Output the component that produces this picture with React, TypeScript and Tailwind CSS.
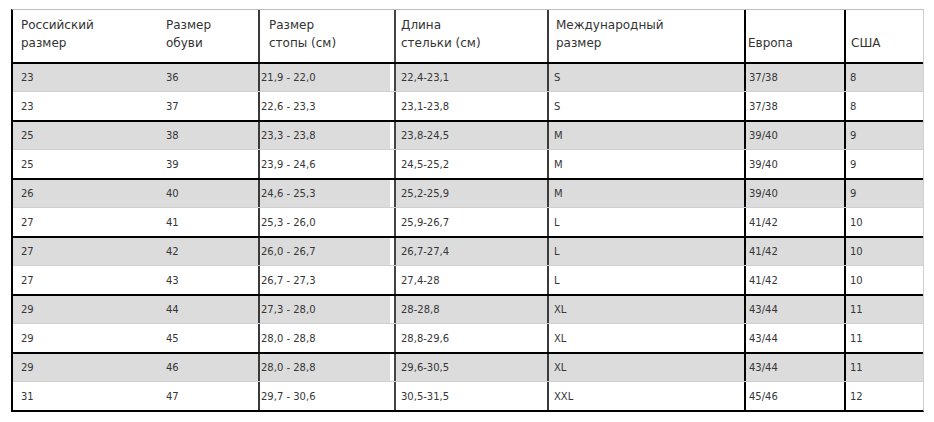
import React from 'react'

const rows: string[][] = [
  ['23', '36', '21,9 - 22,0', '22,4-23,1', 'S', '37/38', '8'],
  ['23', '37', '22,6 - 23,3', '23,1-23,8', 'S', '37/38', '8'],
  ['25', '38', '23,3 - 23,8', '23,8-24,5', 'M', '39/40', '9'],
  ['25', '39', '23,9 - 24,6', '24,5-25,2', 'M', '39/40', '9'],
  ['26', '40', '24,6 - 25,3', '25,2-25,9', 'M', '39/40', '9'],
  ['27', '41', '25,3 - 26,0', '25,9-26,7', 'L', '41/42', '10'],
  ['27', '42', '26,0 - 26,7', '26,7-27,4', 'L', '41/42', '10'],
  ['27', '43', '26,7 - 27,3', '27,4-28', 'L', '41/42', '10'],
  ['29', '44', '27,3 - 28,0', '28-28,8', 'XL', '43/44', '11'],
  ['29', '45', '28,0 - 28,8', '28,8-29,6', 'XL', '43/44', '11'],
  ['29', '46', '28,0 - 28,8', '29,6-30,5', 'XL', '43/44', '11'],
  ['31', '47', '29,7 - 30,6', '30,5-31,5', 'XXL', '45/46', '12'],
]

const header: string[][] = [
  ['Российский', 'размер'],
  ['Размер', 'обуви'],
  ['Размер', 'стопы (см)'],
  ['Длина', 'стельки (см)'],
  ['Международный', 'размер'],
  ['Европа'],
  ['США'],
]

// per column: borders and text indents for header / body cells
const headCell = [
  'pl-[8px]',
  'pl-[9px]',
  'border-l-2 border-[#3a3a3a] pl-[9px]',
  'border-l-2 border-[#444] pl-[5px]',
  'border-l-2 border-[#3a3a3a] pl-[7px]',
  'border-l-2 border-black pl-[2px]',
  'border-l-2 border-black pl-[5px]',
]

const bodyCell = [
  'pl-[8px]',
  'pl-[9px]',
  'border-l-2 border-[#3a3a3a] pl-[1px]',
  'border-l-2 border-[#444] pl-[5px]',
  'border-l-2 border-[#3a3a3a] pl-[5px]',
  'border-l-2 border-black pl-[3px]',
  'border-l-2 border-black pl-[4px]',
]

const grid = 'grid grid-cols-[144px_101px_136px_153px_197px_100px_80px]'

export default function App(): React.JSX.Element {
  return (
    <div className="w-[934px] h-[422px] bg-white pt-[9px] pl-[11px] font-['DejaVu_Sans',sans-serif]">
      <div className="w-[913px] border-l-2 border-l-black border-t border-t-[#bdbdbd] border-r border-r-[#cfcfcf] border-b-2 border-b-black">
        <div className={`${grid} h-[54px] border-b-2 border-black`}>
          {header.map((lines, i) => (
            <div key={i} className={`${headCell[i]} flex flex-col justify-end pb-[10px] text-[12px] leading-[18px] text-[#333]`}>
              {lines.map((l) => (
                <span key={l}>{l}</span>
              ))}
            </div>
          ))}
        </div>
        {rows.map((r, ri) => {
          const gray = ri % 2 === 0
          const last = ri === rows.length - 1
          return (
            <div
              key={ri}
              className={`${grid} ${
                gray
                  ? 'h-[28px] bg-[#dcdcdc] border-b border-[#cfcfcf]'
                  : last
                    ? 'h-[28px] bg-white'
                    : 'h-[30px] bg-white border-b-2 border-black'
              }`}
            >
              {r.map((v, ci) => (
                <div
                  key={ci}
                  className={`${bodyCell[ci]} flex items-center text-[10px] text-[#363636] ${
                    gray && ci === 2 ? 'shadow-[inset_-4px_0_0_white]' : ''
                  }`}
                >
                  {v}
                </div>
              ))}
            </div>
          )
        })}
      </div>
    </div>
  )
}
